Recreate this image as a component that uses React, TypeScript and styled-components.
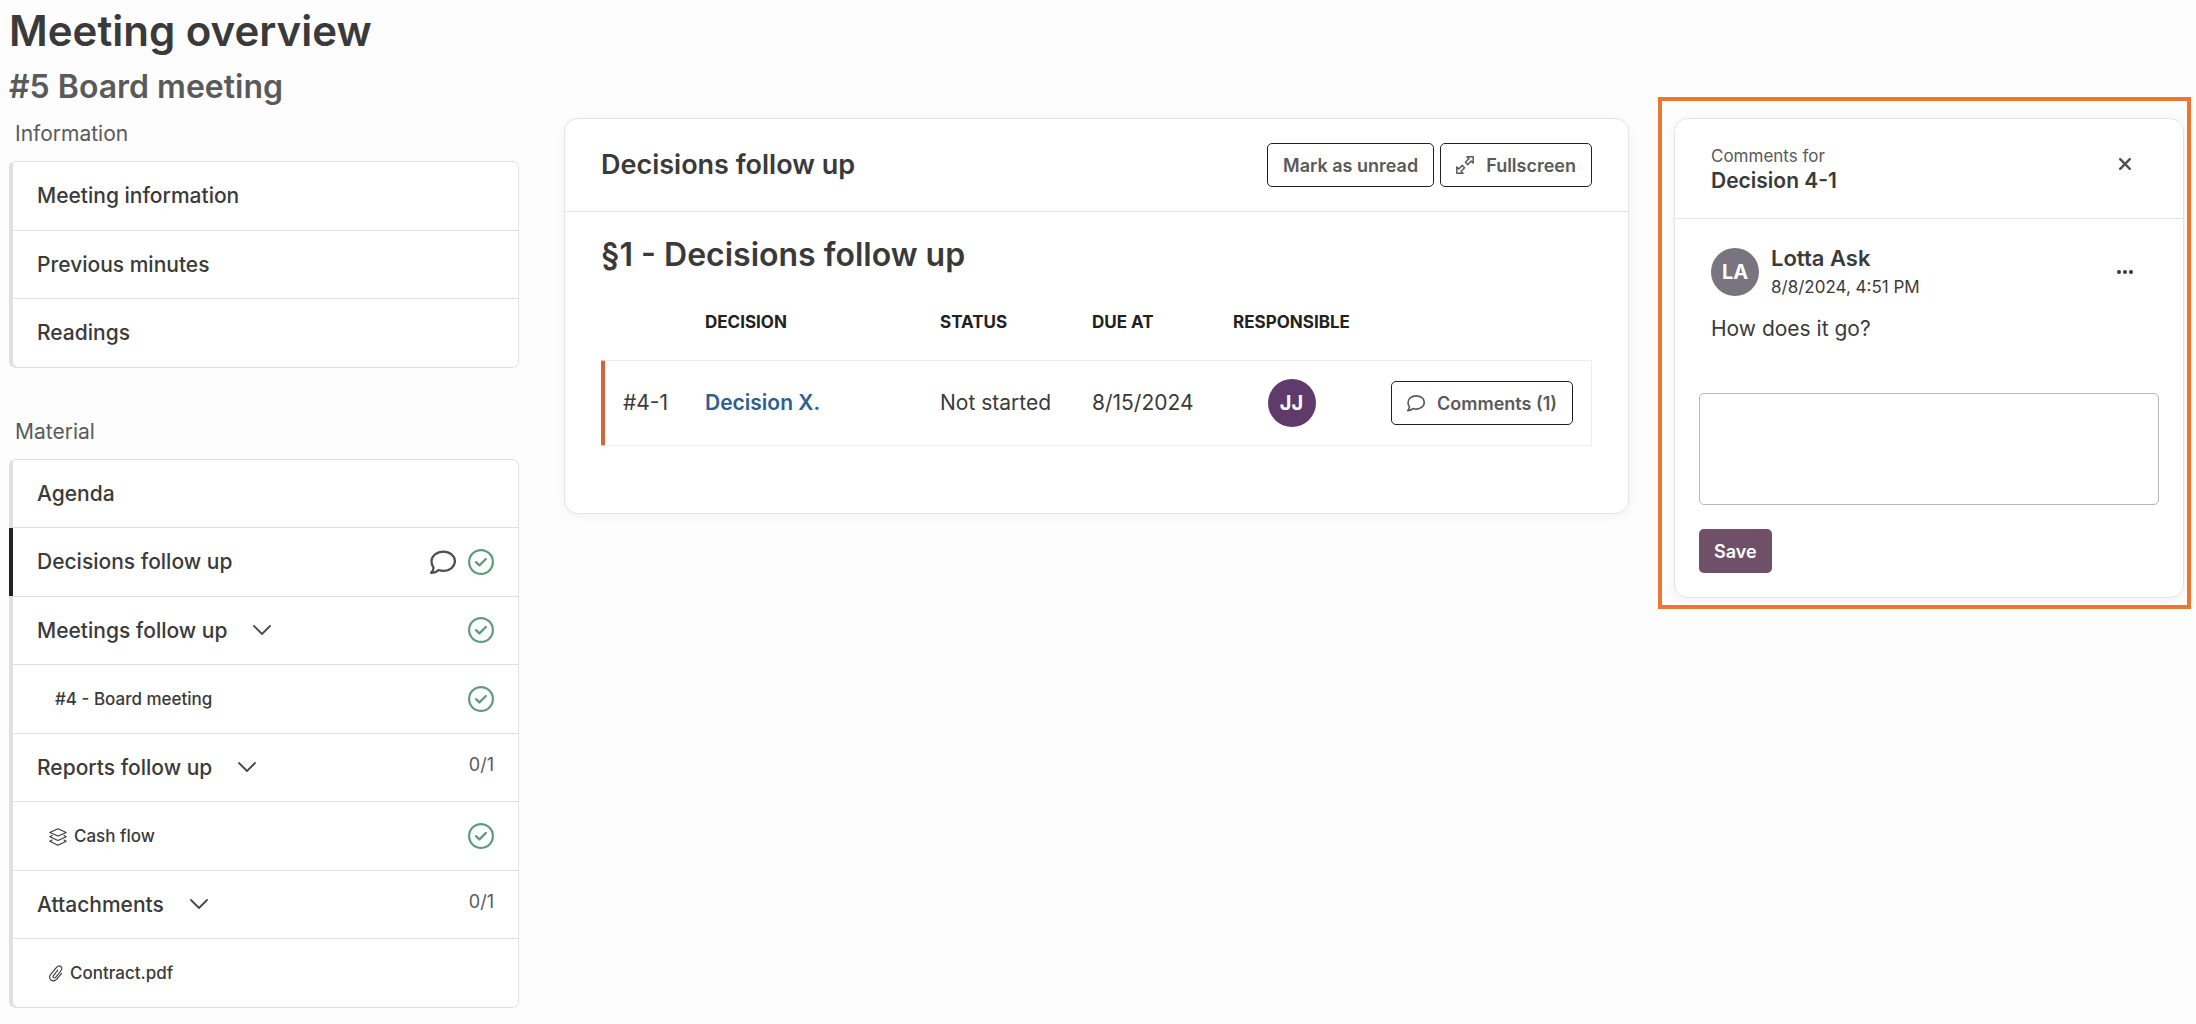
import React from "react";
import styled, { createGlobalStyle, css } from "styled-components";

const GlobalStyle = createGlobalStyle`
  *, *::before, *::after { box-sizing: border-box; }
  body {
    margin: 0;
    background: #fdfdfd;
    color: #3a3a3a;
    font-family: Inter, "Noto Sans", sans-serif;
    font-size: 21px;
    line-height: 1.5;
  }
  h1, h2, h3, p, ul { margin: 0; padding: 0; }
  button, textarea { font: inherit; color: inherit; }
  svg { display: block; flex: none; }
`;

const Page = styled.div`
  display: grid;
  grid-template-columns: minmax(300px, 510fr) minmax(0, 1139fr) minmax(300px, 533fr);
  align-items: start;
  padding: 4px 5px 16px 9px;
`;

const Sidebar = styled.aside`
  min-width: 0;
`;

const PageTitle = styled.h1`
  font-size: 42px;
  line-height: 54px;
  font-weight: 600;
`;

const MeetingTitle = styled.h2`
  margin: 5px 0 7px;
  font-size: 32px;
  line-height: 48px;
  font-weight: 600;
  color: #5a5a5a;
`;

const NavTitle = styled.h3`
  padding: 0 6px 11px;
  font-size: 21px;
  line-height: 32px;
  font-weight: 400;
  color: #5a5a5a;
`;

const NavSection = styled.nav`
  & + & {
    margin-top: 48px;
  }
`;

const NavList = styled.ul`
  list-style: none;
  border-top: 1px solid #e0e0e0;
  border-radius: 6px;
  overflow: hidden;
  background: #fff;
`;

const NavRow = styled.li<{ $active?: boolean }>`
  display: flex;
  align-items: center;
  gap: 12px;
  padding: 18px 24px 18px 28px;
  border: 1px solid #e0e0e0;
  border-width: 0 1px 1px 0;
  box-shadow: inset 4px 0 0 ${(p) => (p.$active ? "#212121" : "#e0e0e0")};
  &::before {
    content: "\\200b";
    width: 0;
    margin-right: -12px;
  }
  &:first-child {
    border-radius: 0 6px 0 0;
  }
  &:last-child {
    border-radius: 0 0 6px 6px;
  }
`;

const NavLink = styled.a<{ $level?: "child" | "file" }>`
  display: flex;
  align-items: center;
  gap: 7px;
  color: inherit;
  text-decoration: none;
  font-weight: 500;
  white-space: nowrap;
  ${(p) =>
    p.$level &&
    css`
      font-size: 17px;
      padding-top: 2px;
      padding-left: ${p.$level === "child" ? 18 : 12}px;
    `}
`;

const Toggle = styled.button`
  margin-left: 12px;
  padding: 2px;
  border: 0;
  background: none;
  color: #4a4a4a;
`;

const RowEnd = styled.span`
  display: flex;
  align-items: center;
  gap: 12px;
  margin-left: auto;
  color: #505050;
`;

const Counter = styled.span`
  padding-bottom: 4px;
  font-size: 18px;
  line-height: 24px;
  color: #5a5a5a;
`;

const Card = styled.section`
  border: 1px solid #e4e4e4;
  border-radius: 14px;
  background: #fff;
  box-shadow: 0 2px 12px rgba(0, 0, 0, 0.05);
`;

const Main = styled.main`
  min-width: 0;
  margin: 114px 29px 0 45px;
`;

const CardHeader = styled.header`
  display: flex;
  align-items: center;
  justify-content: space-between;
  gap: 6px;
  padding: 24px 36px;
  border-bottom: 1px solid #e4e4e4;
`;

const CardTitle = styled.h2`
  margin-right: auto;
  font-size: 27px;
  line-height: 44px;
  font-weight: 600;
`;

const OutlineButton = styled.button`
  display: inline-flex;
  align-items: center;
  gap: 12px;
  height: 44px;
  padding: 0 15px;
  border: 1px solid #212121;
  border-radius: 5px;
  background: #fff;
  font-size: 18px;
  font-weight: 600;
  color: #5a5a5a;
  white-space: nowrap;
`;

const CardBody = styled.div`
  padding: 23px 36px 67px;
`;

const SectionTitle = styled.h3`
  font-size: 32px;
  line-height: 40px;
  font-weight: 600;
`;

const Table = styled.table`
  width: 100%;
  margin-top: 16px;
  table-layout: fixed;
  border-collapse: separate;
  border-spacing: 0;
`;

const Col = styled.col<{ $w?: number }>`
  width: ${(p) => (p.$w ? `${p.$w}px` : "auto")};
`;

const Th = styled.th<{ $center?: boolean }>`
  padding: 19px ${(p) => (p.$center ? 0 : 18)}px 26px;
  font-size: 17px;
  line-height: 24px;
  font-weight: 700;
  text-align: ${(p) => (p.$center ? "center" : "left")};
  text-transform: uppercase;
  color: #212121;
  white-space: nowrap;
`;

const Td = styled.td<{ $end?: boolean }>`
  padding: 18px ${(p) => (p.$end ? 18 : 0)}px 18px 18px;
  border: 1px solid #ededed;
  border-width: 1px 0;
  white-space: nowrap;
  vertical-align: middle;
  &:first-child {
    border-left: 4px solid #d0653b;
    border-radius: 2px 0 0 2px;
  }
  &:last-child {
    border-right-width: 1px;
  }
`;

const RowActions = styled.div`
  display: flex;
  justify-content: flex-end;
`;

const AvatarCell = styled.div`
  display: flex;
  justify-content: center;
  margin-left: -18px;
`;

const DecisionLink = styled.a`
  color: #2e5f8e;
  font-weight: 600;
  text-decoration: none;
`;

const Avatar = styled.span<{ $tone: string }>`
  display: grid;
  place-items: center;
  flex: none;
  width: 48px;
  height: 48px;
  border-radius: 50%;
  background: ${(p) => p.$tone};
  color: #fff;
  font-size: 20px;
  line-height: 24px;
  font-weight: 700;
`;

const Highlight = styled.aside`
  min-width: 0;
  margin-top: 93px;
  padding: 17px 3px 7px 12px;
  border: 4px solid #ed7730;
`;

const PanelHeader = styled.header`
  display: flex;
  align-items: flex-start;
  justify-content: space-between;
  padding: 23px 36px 24px;
  border-bottom: 1px solid #e4e4e4;
`;

const PanelTitle = styled.h2`
  padding-top: 2px;
  font-size: 21px;
  line-height: 26px;
  font-weight: 600;
`;

const PanelEyebrow = styled.span`
  display: block;
  font-size: 17px;
  line-height: 24px;
  font-weight: 400;
  color: #5a5a5a;
`;

const IconButton = styled.button`
  display: grid;
  place-items: center;
  width: 44px;
  height: 44px;
  margin-left: auto;
  padding: 0;
  border: 0;
  background: none;
`;

const Comment = styled.article`
  padding: 24px 36px 0;
`;

const CommentHeader = styled.div`
  display: flex;
  align-items: center;
  gap: 12px;
`;

const Author = styled.div`
  font-size: 22px;
  line-height: 30px;
  font-weight: 600;
`;

const Timestamp = styled.time`
  display: block;
  font-size: 17px;
  line-height: 28px;
  font-weight: 400;
`;

const CommentText = styled.p`
  margin-top: 12px;
  font-size: 21px;
  line-height: 32px;
`;

const ReplyForm = styled.form`
  display: flex;
  flex-direction: column;
  align-items: flex-start;
  gap: 24px;
  padding: 48px 24px 24px;
`;

const ReplyBox = styled.textarea`
  display: block;
  width: 100%;
  height: 112px;
  padding: 12px;
  border: 1px solid #b8b8b8;
  border-radius: 5px;
  background: #fff;
  resize: none;
`;

const SaveButton = styled.button`
  height: 44px;
  padding: 0 15px;
  border: 0;
  border-radius: 5px;
  background: #6f5068;
  color: #fff;
  font-size: 18px;
  font-weight: 600;
`;

const DoneIcon = () => (
  <svg width="26" height="26" viewBox="0 0 26 26" fill="none" stroke="#5f9c7c" strokeWidth="2.200" strokeLinecap="round" strokeLinejoin="round" role="img" aria-label="Done">
    <circle cx="13" cy="13" r="11.900" />
    <path d="M8 13.2l3.400 3.200 6.400-6.400" strokeWidth="2.400" />
  </svg>
);

const BubbleIcon = ({ size = 18, weight = 1.7 }: { size?: number; weight?: number }) => (
  <svg width={size} height={size} viewBox="0 0 26 26" fill="none" stroke="currentColor" strokeWidth={weight} strokeLinejoin="round" aria-hidden="true">
    <path d="M13.4 2.600c6.400 0 11.500 4.200 11.500 9.600s-5.100 9.600-11.500 9.600c-1.700 0-3.300-.3-4.800-.8-1.900 1.900-4.500 2.900-7.600 2.900 1.500-1.500 2.500-3.400 2.600-5.100C2.400 17 1.500 14.900 1.500 12.200 1.500 6.800 7 2.600 13.400 2.600z" />
  </svg>
);

const ChevronIcon = () => (
  <svg width="18" height="18" viewBox="0 0 18 18" fill="none" stroke="currentColor" strokeWidth="1.800" strokeLinecap="round" strokeLinejoin="round" aria-hidden="true">
    <path d="M1 5l8 8 8-8" />
  </svg>
);

const LayersIcon = () => (
  <svg width="18" height="18" viewBox="0 0 18 18" fill="none" stroke="currentColor" strokeWidth="1.100" strokeLinejoin="round" strokeLinecap="round" aria-hidden="true">
    <path d="M9 .8l8.200 3.600L9 8 .8 4.400z" />
    <path d="M3 7.600L.8 8.800 9 12.600l8.200-3.800L15 7.600" />
    <path d="M3 12L.8 13.300 9 17.200l8.200-3.900L15 12" />
  </svg>
);

const ClipIcon = () => (
  <svg width="14" height="17" viewBox="0 0 14 17" fill="none" stroke="currentColor" strokeWidth="1.100" strokeLinecap="round" strokeLinejoin="round" aria-hidden="true">
    <path d="M8.800 5.200L4.600 10.400c-.7.900-.6 1.700 0 2.200s1.500.4 2.200-.4l5-6.200c1.400-1.800 1.200-3.500 0-4.500s-3-.8-4.300.8L1.900 9.200C.3 11.200.4 13.600 2 15s4.100 1.200 5.700-.8l4.800-5.900" />
  </svg>
);

const ExpandIcon = () => (
  <svg width="18" height="18" viewBox="0 0 18 18" fill="none" stroke="currentColor" strokeWidth="1.500" strokeLinejoin="round" aria-hidden="true">
    <path d="M11 .8h6.200V7l-2-1.900-3.400 3.500-2.400-2.300 3.500-3.500z" />
    <path d="M7 17.200H.8V11l2 1.900 3.400-3.500 2.400 2.300-3.500 3.500z" />
  </svg>
);

const CloseIcon = () => (
  <svg width="12" height="12" viewBox="0 0 12 12" stroke="#505050" strokeWidth="2.400" strokeLinecap="round" aria-hidden="true">
    <path d="M1.200 1.200l9.600 9.600M10.800 1.200l-9.600 9.600" />
  </svg>
);

const DotsIcon = () => (
  <svg width="16" height="4" viewBox="0 0 16 4" fill="currentColor" aria-hidden="true">
    <circle cx="2" cy="2" r="2" />
    <circle cx="8" cy="2" r="2" />
    <circle cx="14" cy="2" r="2" />
  </svg>
);

type Item = {
  label: string;
  level?: "child" | "file";
  icon?: React.ReactNode;
  toggle?: boolean;
  active?: boolean;
  commented?: boolean;
  done?: boolean;
  count?: string;
};

const information: Item[] = [
  { label: "Meeting information" },
  { label: "Previous minutes" },
  { label: "Readings" },
];

const material: Item[] = [
  { label: "Agenda" },
  { label: "Decisions follow up", active: true, commented: true, done: true },
  { label: "Meetings follow up", toggle: true, done: true },
  { label: "#4 - Board meeting", level: "child", done: true },
  { label: "Reports follow up", toggle: true, count: "0/1" },
  { label: "Cash flow", level: "file", icon: <LayersIcon />, done: true },
  { label: "Attachments", toggle: true, count: "0/1" },
  { label: "Contract.pdf", level: "file", icon: <ClipIcon /> },
];

const NavGroup = ({ title, items }: { title: string; items: Item[] }) => (
  <NavSection aria-label={title}>
    <NavTitle>{title}</NavTitle>
    <NavList>
      {items.map((item) => (
        <NavRow key={item.label} $active={item.active}>
          <NavLink href="#" $level={item.level} aria-current={item.active ? "page" : undefined}>
            {item.icon}
            {item.label}
          </NavLink>
          {item.toggle && (
            <Toggle type="button" aria-label={`Toggle ${item.label}`}>
              <ChevronIcon />
            </Toggle>
          )}
          <RowEnd>
            {item.commented && <BubbleIcon size={26} weight={2.3} />}
            {item.done && <DoneIcon />}
            {item.count && <Counter>{item.count}</Counter>}
          </RowEnd>
        </NavRow>
      ))}
    </NavList>
  </NavSection>
);

export default function App() {
  return (
    <>
      <GlobalStyle />
      <Page>
        <Sidebar>
          <PageTitle>Meeting overview</PageTitle>
          <MeetingTitle>#5 Board meeting</MeetingTitle>
          <NavGroup title="Information" items={information} />
          <NavGroup title="Material" items={material} />
        </Sidebar>

        <Main>
          <Card>
            <CardHeader>
              <CardTitle>Decisions follow up</CardTitle>
              <OutlineButton type="button">Mark as unread</OutlineButton>
              <OutlineButton type="button">
                <ExpandIcon />
                Fullscreen
              </OutlineButton>
            </CardHeader>
            <CardBody>
              <SectionTitle>§1 - Decisions follow up</SectionTitle>
              <Table>
                <colgroup>
                  <Col $w={86} />
                  <Col />
                  <Col $w={152} />
                  <Col $w={141} />
                  <Col $w={153} />
                  <Col $w={224} />
                </colgroup>
                <thead>
                  <tr>
                    <Th />
                    <Th scope="col">Decision</Th>
                    <Th scope="col">Status</Th>
                    <Th scope="col">Due at</Th>
                    <Th scope="col" $center>Responsible</Th>
                    <Th />
                  </tr>
                </thead>
                <tbody>
                  <tr>
                    <Td>#4-1</Td>
                    <Td>
                      <DecisionLink href="#">Decision X.</DecisionLink>
                    </Td>
                    <Td>Not started</Td>
                    <Td>8/15/2024</Td>
                    <Td>
                      <AvatarCell>
                        <Avatar $tone="#5f3a6b">JJ</Avatar>
                      </AvatarCell>
                    </Td>
                    <Td $end>
                      <RowActions>
                        <OutlineButton type="button">
                          <BubbleIcon weight={2.4} />
                          Comments (1)
                        </OutlineButton>
                      </RowActions>
                    </Td>
                  </tr>
                </tbody>
              </Table>
            </CardBody>
          </Card>
        </Main>

        <Highlight>
          <Card>
            <PanelHeader>
              <PanelTitle>
                <PanelEyebrow>Comments for</PanelEyebrow>
                Decision 4-1
              </PanelTitle>
              <IconButton type="button" aria-label="Close comments">
                <CloseIcon />
              </IconButton>
            </PanelHeader>
            <Comment>
              <CommentHeader>
                <Avatar $tone="#787480">LA</Avatar>
                <Author>
                  Lotta Ask
                  <Timestamp>8/8/2024, 4:51 PM</Timestamp>
                </Author>
                <IconButton type="button" aria-label="Comment options">
                  <DotsIcon />
                </IconButton>
              </CommentHeader>
              <CommentText>How does it go?</CommentText>
            </Comment>
            <ReplyForm>
              <ReplyBox aria-label="Write a comment" />
              <SaveButton type="button">Save</SaveButton>
            </ReplyForm>
          </Card>
        </Highlight>
      </Page>
    </>
  );
}
